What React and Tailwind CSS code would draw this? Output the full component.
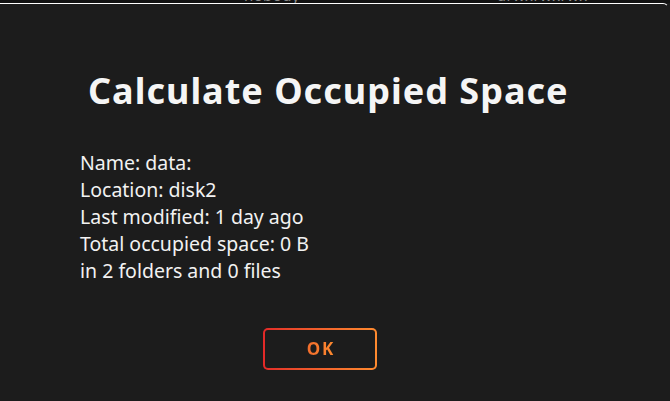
export default function App() {
  return (
    <div
      className="w-[670px] h-[401px] overflow-hidden bg-[#1c1c1c] text-[#f2f2f2]"
      style={{ fontFamily: '"Noto Sans", "Open Sans", sans-serif' }}
    >
      {/* file listing row peeking out above the dialog */}
      <div className="h-[3px] overflow-hidden bg-[#121212]">
        <div className="flex -mt-[13px] text-[15px] leading-[17px] text-[#8a8a8a] tracking-wide">
          <span className="ml-[244px]">nobody</span>
          <span className="ml-[197px]">drwxrwxrwx</span>
        </div>
      </div>

      {/* dialog */}
      <div className="h-full border-t-[1.5px] border-r-[1.5px] border-r-transparent border-t-white rounded-tr-[6px] mr-[1px]">
        <h1 className="pt-[63px] pl-[88px] text-[36px] leading-[48px] font-bold tracking-[1px] text-[#f5f5f5]">
          Calculate Occupied Space
        </h1>

        <div className="mt-[34px] pl-[80px] text-[19.5px] leading-[27px]">
          <div>Name: data:</div>
          <div>Location: disk2</div>
          <div>Last modified: 1 day ago</div>
          <div>Total occupied space: 0 B</div>
          <div>in 2 folders and 0 files</div>
        </div>

        <div className="mt-[44px] pl-[263px]">
          <button className="w-[114px] h-[42px] rounded-[5px] p-[2px] bg-gradient-to-r from-[#e22828] to-[#ff8b2f]">
            <span className="flex h-full w-full items-center justify-center rounded-[3px] bg-[#1c1c1c]">
              <span className="bg-gradient-to-r from-[#f06a2c] to-[#ff8b2f] bg-clip-text text-transparent text-[17px] font-bold tracking-[2px] pl-[2px]">
                OK
              </span>
            </span>
          </button>
        </div>
      </div>
    </div>
  );
}
